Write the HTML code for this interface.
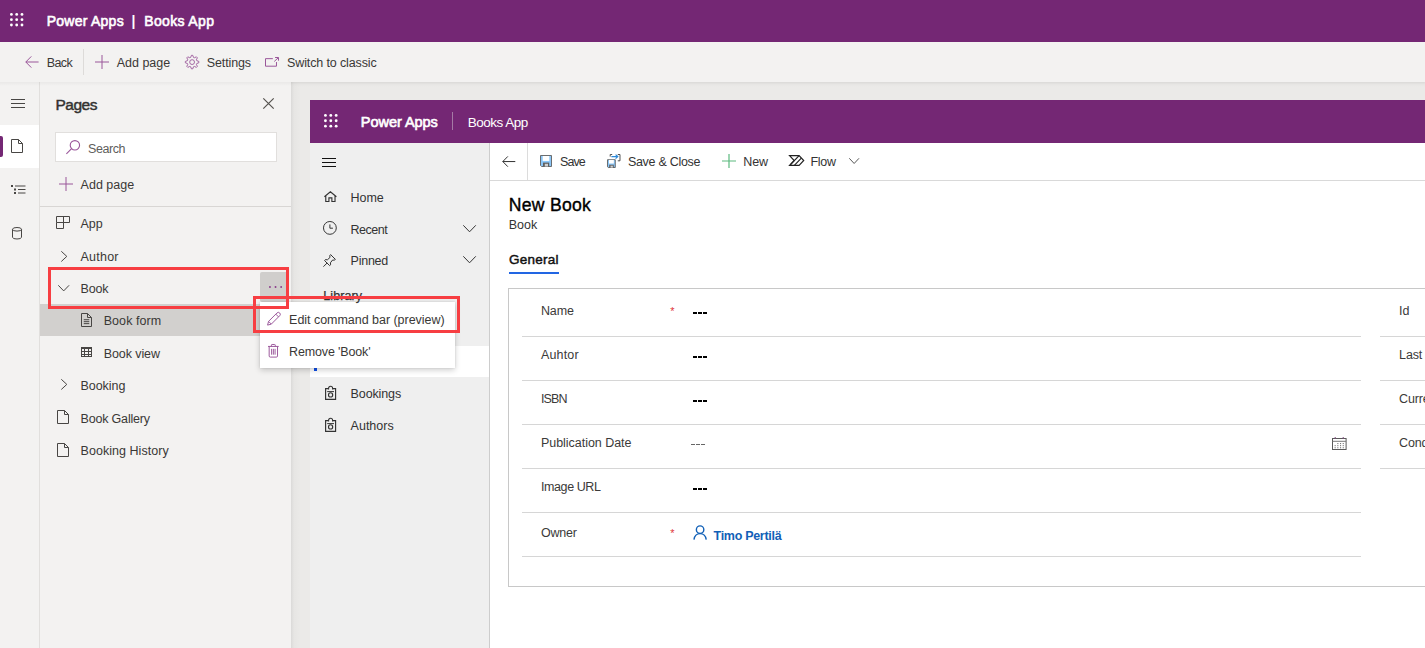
<!DOCTYPE html>
<html><head><meta charset="utf-8"><title>Power Apps</title>
<style>
*{box-sizing:border-box;margin:0;padding:0}
html,body{width:1425px;height:648px;overflow:hidden;background:#ecebe9;font-family:"Liberation Sans",sans-serif}
.a{position:absolute}
.t{position:absolute;white-space:nowrap;line-height:1}
.pb{display:inline-block;width:0;height:0;vertical-align:baseline}
svg{position:absolute;overflow:visible}
.hd{left:0;top:0;width:1425px;height:42px;background:#742774}
.cb{left:0;top:42px;width:1425px;height:40px;background:#f3f2f1;box-shadow:0 1px 2px rgba(0,0,0,.045)}
.canvas{left:291px;top:82px;width:1134px;height:566px;background:linear-gradient(to right,rgba(0,0,0,.07),rgba(0,0,0,.02) 3px,rgba(0,0,0,0) 10px),linear-gradient(to bottom,rgba(0,0,0,.035),rgba(0,0,0,0) 5px),#ebeae8}
.rail{left:0;top:82px;width:40px;height:566px;background:#f3f2f1;border-right:1px solid #e1dfdd}
.railsel{left:0;top:125px;width:39px;height:43px;background:#fff}
.railbar{left:0;top:136px;width:3px;height:21px;background:#742774;border-radius:0 2px 2px 0}
.panel{left:40px;top:82px;width:251px;height:566px;background:#f3f2f1}
.search{left:55px;top:132px;width:222px;height:30px;background:#fff;border:1px solid #e1dfdd}
.sep{left:40px;top:206px;width:251px;height:1px;background:#d8d6d4}
.rowsel{left:40px;top:304px;width:251px;height:32px;background:#d2d0ce}
.more{left:260px;top:272px;width:28px;height:30px;background:#d0cecc;border-radius:2px}
.ihd{left:310px;top:100px;width:1115px;height:43px;background:#742774}
.inav{left:310px;top:143px;width:180px;height:505px;background:#efefef;border-right:1px solid #cdcdcd}
.inavsel{left:310px;top:346px;width:179px;height:31px;background:#fff}
.inavbar{left:314px;top:351px;width:3px;height:20px;background:#0f4fe8}
.main{left:490px;top:143px;width:935px;height:505px;background:#fff}
.icb{left:490px;top:180px;width:935px;height:1px;background:#d9d9d9}
.icbv{left:527px;top:143px;width:1px;height:37px;background:#dcdcdc}
.tabul{left:509px;top:272px;width:50px;height:2px;background:#2266e3}
.sect{left:508px;top:288px;width:930px;height:299px;border:1px solid #c8c8c8;background:#fff}
.ln{height:1px;background:#d6d6d6}
.menu{left:260px;top:302px;width:195px;height:66px;background:#fff;box-shadow:0 2px 6px rgba(0,0,0,.2),0 0 2px rgba(0,0,0,.1)}
.red{border:3px solid #f73e42}
.dash{height:2px;background:#000}
</style></head><body>
<div class="a canvas"></div>
<div class="a hd"></div>
<div class="a cb"></div>
<div class="a rail"></div><div class="a railsel"></div><div class="a railbar"></div>
<div class="a panel"></div>
<div class="a" style="left:0;top:82px;width:291px;height:4px;background:linear-gradient(to bottom,rgba(0,0,0,.04),rgba(0,0,0,0))"></div>
<div class="a search"></div>
<div class="a sep"></div>
<div class="a rowsel"></div>
<div class="a more"></div>
<div class="a ihd"></div>
<div class="a inav"></div><div class="a inavsel"></div><div class="a inavbar"></div>
<div class="a main"></div>
<div class="a icb"></div><div class="a icbv"></div>
<div class="a tabul"></div>
<div class="a sect"></div>
<div class="a ln" style="left:522px;top:336px;width:839px"></div>
<div class="a ln" style="left:522px;top:380px;width:839px"></div>
<div class="a ln" style="left:522px;top:424px;width:839px"></div>
<div class="a ln" style="left:522px;top:468px;width:839px"></div>
<div class="a ln" style="left:522px;top:512px;width:839px"></div>
<div class="a ln" style="left:522px;top:556px;width:839px"></div>
<div class="a ln" style="left:1380px;top:336px;width:45px"></div>
<div class="a ln" style="left:1380px;top:380px;width:45px"></div>
<div class="a ln" style="left:1380px;top:424px;width:45px"></div>
<div class="a ln" style="left:1380px;top:468px;width:45px"></div>
<svg style="left:10.2px;top:13.2px" width="13.4" height="13.4" viewBox="0 0 13.4 13.4" ><g fill="#fff"><circle cx="1.41" cy="1.41" r="1.41"/><circle cx="1.41" cy="6.70" r="1.41"/><circle cx="1.41" cy="11.99" r="1.41"/><circle cx="6.70" cy="1.41" r="1.41"/><circle cx="6.70" cy="6.70" r="1.41"/><circle cx="6.70" cy="11.99" r="1.41"/><circle cx="11.99" cy="1.41" r="1.41"/><circle cx="11.99" cy="6.70" r="1.41"/><circle cx="11.99" cy="11.99" r="1.41"/></g></svg>
<svg style="left:25px;top:56px" width="13.6" height="12" viewBox="0 0 13.6 12" ><path d="M13.6 6.0H0.8M6.3 0.4L0.8 6.0L6.3 11.6" fill="none" stroke="#9a569a" stroke-width="1"/></svg>
<div class="a" style="left:83px;top:49px;width:1px;height:26px;background:#dddbd9"></div>
<svg style="left:94.5px;top:54.5px" width="14" height="14" viewBox="0 0 14 14" ><path d="M7.0 0V14M0 7.0H14" fill="none" stroke="#9a569a" stroke-width="1"/></svg>
<svg style="left:184.7px;top:55px" width="14.2" height="14.2" viewBox="0 0 14.2 14.2" ><path d="M13.87 6.43L13.87 7.77L11.79 8.52L11.42 9.41L12.36 11.41L11.41 12.36L9.41 11.42L8.52 11.79L7.77 13.87L6.43 13.87L5.68 11.79L4.79 11.42L2.79 12.36L1.84 11.41L2.78 9.41L2.41 8.52L0.33 7.77L0.33 6.43L2.41 5.68L2.78 4.79L1.84 2.79L2.79 1.84L4.79 2.78L5.68 2.41L6.43 0.33L7.77 0.33L8.52 2.41L9.41 2.78L11.41 1.84L12.36 2.79L11.42 4.79L11.79 5.68Z" fill="none" stroke="#9a569a" stroke-width="0.9" stroke-linejoin="round"/><circle cx="7.1" cy="7.1" r="2.41" fill="none" stroke="#9a569a" stroke-width="0.9"/></svg>
<svg style="left:265px;top:56.8px" width="14" height="9.7" viewBox="0 0 14 9.7" ><path d="M7.840000000000001 1.649H0.5V9.2H11.479999999999999V5.044" fill="none" stroke="#9a569a" stroke-width="1"/><path d="M9.24 4.462L13.2 0.8" fill="none" stroke="#9a569a" stroke-width="1"/><path d="M9.799999999999999 0.3H13.7V4.074Z" fill="#9a569a" stroke="none" opacity="0.0"/><path d="M10.08 0.5H13.5V3.686" fill="none" stroke="#9a569a" stroke-width="1"/></svg>
<svg style="left:11px;top:99px" width="14" height="9" viewBox="0 0 14 9" ><path d="M0 0.5H14M0 4.5H14M0 8.5H14" fill="none" stroke="#484644" stroke-width="1" shape-rendering="crispEdges"/></svg>
<svg style="left:11px;top:139px" width="12" height="14" viewBox="0 0 12 14" ><path d="M0.5 0.5H7.5L11.5 4.5V13.5H0.5Z" fill="none" stroke="#484644" stroke-width="1" stroke-linejoin="miter"/><path d="M7.5 0.5V4.5H11.5" fill="none" stroke="#484644" stroke-width="1"/></svg>
<svg style="left:10.5px;top:185px" width="14.5" height="9" viewBox="0 0 14.5 9" ><rect x="0" y="0" width="2" height="2" fill="#484644"/><path d="M4 1H14.5" fill="none" stroke="#484644" stroke-width="1"/><rect x="3" y="3.5" width="2" height="2" fill="#484644"/><path d="M7 4.5H14.5" fill="none" stroke="#484644" stroke-width="1"/><rect x="3" y="7" width="2" height="2" fill="#484644"/><path d="M7 8H14.5" fill="none" stroke="#484644" stroke-width="1"/></svg>
<svg style="left:12px;top:227px" width="10" height="12.5" viewBox="0 0 10 12.5" ><ellipse cx="5.0" cy="2.3" rx="4.5" ry="1.8" fill="none" stroke="#484644" stroke-width="1"/><path d="M0.5 2.3V10.2A4.5 1.8 0 0 0 9.5 10.2V2.3" fill="none" stroke="#484644" stroke-width="1"/></svg>
<svg style="left:263.2px;top:97.7px" width="11" height="11" viewBox="0 0 11 11" ><path d="M0.3 0.3L10.7 10.7M10.7 0.3L0.3 10.7" fill="none" stroke="#55534f" stroke-width="1.2"/></svg>
<svg style="left:65.9px;top:139.8px" width="14.2" height="14.2" viewBox="0 0 14.2 14.2" ><circle cx="8.91" cy="5.29" r="4.69" fill="none" stroke="#9a569a" stroke-width="1.1"/><path d="M5.60 8.60L0.4 13.799999999999999" fill="none" stroke="#9a569a" stroke-width="1.1"/></svg>
<svg style="left:58.5px;top:176.5px" width="14" height="14" viewBox="0 0 14 14" ><path d="M7.0 0V14M0 7.0H14" fill="none" stroke="#9a569a" stroke-width="1"/></svg>
<svg style="left:56px;top:216px" width="14" height="13" viewBox="0 0 14 13" ><path d="M0.5 0.5H13.5V6.5H0.5Z" fill="none" stroke="#484644" stroke-width="1"/><path d="M7.5 0.5V12.5H0.5V6.5" fill="none" stroke="#484644" stroke-width="1"/></svg>
<svg style="left:61px;top:250.8px" width="6.3" height="10.8" viewBox="0 0 6.3 10.8" ><path d="M0.3 0.3L5.8 5.4L0.3 10.5" fill="none" stroke="#484644" stroke-width="1"/></svg>
<svg style="left:57.8px;top:285px" width="11.4" height="6.4" viewBox="0 0 11.4 6.4" ><path d="M0.3 0.3L5.7 5.9L11.1 0.3" fill="none" stroke="#484644" stroke-width="1"/></svg>
<svg style="left:81px;top:313px" width="11" height="14" viewBox="0 0 11 14" ><path d="M0.5 0.5H6.5L10.5 4.5V13.5H0.5Z" fill="none" stroke="#484644" stroke-width="1" stroke-linejoin="miter"/><path d="M6.5 0.5V4.5H10.5" fill="none" stroke="#484644" stroke-width="1"/><path d="M2.75 6.72H8.25" fill="none" stroke="#484644" stroke-width="1"/><path d="M2.75 8.68H8.25" fill="none" stroke="#484644" stroke-width="1"/><path d="M2.75 10.64H8.25" fill="none" stroke="#484644" stroke-width="1"/></svg>
<svg style="left:81px;top:347px" width="11" height="10" viewBox="0 0 11 10" ><rect x="0.5" y="0.5" width="10" height="9" fill="none" stroke="#484644" stroke-width="1"/><path d="M0.5 1.5H10.5" fill="none" stroke="#484644" stroke-width="1"/><path d="M0.5 4.5H10.5M0.5 7.5H10.5M3.5 0.5V9.5M7.5 0.5V9.5" fill="none" stroke="#484644" stroke-width="1"/></svg>
<svg style="left:60.5px;top:379.3px" width="6.3" height="10.8" viewBox="0 0 6.3 10.8" ><path d="M0.3 0.3L5.8 5.4L0.3 10.5" fill="none" stroke="#484644" stroke-width="1"/></svg>
<svg style="left:57px;top:410px" width="12" height="14" viewBox="0 0 12 14" ><path d="M0.5 0.5H7.5L11.5 4.5V13.5H0.5Z" fill="none" stroke="#484644" stroke-width="1" stroke-linejoin="miter"/><path d="M7.5 0.5V4.5H11.5" fill="none" stroke="#484644" stroke-width="1"/></svg>
<svg style="left:57px;top:443px" width="12" height="14" viewBox="0 0 12 14" ><path d="M0.5 0.5H7.5L11.5 4.5V13.5H0.5Z" fill="none" stroke="#484644" stroke-width="1" stroke-linejoin="miter"/><path d="M7.5 0.5V4.5H11.5" fill="none" stroke="#484644" stroke-width="1"/></svg>
<svg style="left:268.5px;top:285.7px" width="13.1" height="2" viewBox="0 0 13.1 2" ><circle cx="0.95" cy="1" r="0.95" fill="#8a3a8a"/><circle cx="6.55" cy="1" r="0.95" fill="#8a3a8a"/><circle cx="12.15" cy="1" r="0.95" fill="#8a3a8a"/></svg>
<svg style="left:323.8px;top:114px" width="13.6" height="13.6" viewBox="0 0 13.6 13.6" ><g fill="#fff"><circle cx="1.43" cy="1.43" r="1.43"/><circle cx="1.43" cy="6.80" r="1.43"/><circle cx="1.43" cy="12.17" r="1.43"/><circle cx="6.80" cy="1.43" r="1.43"/><circle cx="6.80" cy="6.80" r="1.43"/><circle cx="6.80" cy="12.17" r="1.43"/><circle cx="12.17" cy="1.43" r="1.43"/><circle cx="12.17" cy="6.80" r="1.43"/><circle cx="12.17" cy="12.17" r="1.43"/></g></svg>
<div class="a" style="left:452px;top:112px;width:1px;height:18px;background:#a57aa5"></div>
<svg style="left:322px;top:158px" width="14" height="9" viewBox="0 0 14 9" ><path d="M0 0.5H14M0 4.5H14M0 8.5H14" fill="none" stroke="#111" stroke-width="1" shape-rendering="crispEdges"/></svg>
<svg style="left:323.8px;top:191.3px" width="12.8" height="11.2" viewBox="0 0 13 11" ><path d="M0.4 5.6L6.5 0.6L12.6 5.6M1.8 4.6V10.5H5V6.8H8V10.5H11.2V4.6" fill="none" stroke="#333" stroke-width="1.15" stroke-linejoin="miter"/></svg>
<svg style="left:323px;top:221px" width="13.8" height="13.8" viewBox="0 0 13.8 13.8" ><circle cx="6.9" cy="6.9" r="6.4" fill="none" stroke="#333" stroke-width="1"/><path d="M6.9 3.45V7.2H9.936" fill="none" stroke="#333" stroke-width="1"/></svg>
<svg style="left:323px;top:254px" width="13" height="13" viewBox="0 0 13 13" ><path d="M7.6 0.6L12.4 5.4L11.2 6.2L9.6 6L7.4 8.8L7.6 10.8L6.6 11.6L1.6 6.6L2.4 5.6L4.4 5.8L7 3.4L6.8 1.6Z" fill="none" stroke="#333" stroke-width="1" stroke-linejoin="round"/><path d="M4.2 8.9L0.4 12.7" fill="none" stroke="#333" stroke-width="1"/></svg>
<svg style="left:462.6px;top:225.2px" width="13.1" height="7.3" viewBox="0 0 13.1 7.3" ><path d="M0.3 0.3L6.55 6.8L12.799999999999999 0.3" fill="none" stroke="#333" stroke-width="1"/></svg>
<svg style="left:462.6px;top:256.2px" width="13.1" height="7.3" viewBox="0 0 13.1 7.3" ><path d="M0.3 0.3L6.55 6.8L12.799999999999999 0.3" fill="none" stroke="#333" stroke-width="1"/></svg>
<svg style="left:324.5px;top:386px" width="11.2" height="14" viewBox="0 0 11.2 14" ><path d="M3.4 2.6H0.6V13.4H10.6V2.6H7.8" fill="none" stroke="#333" stroke-width="1.15"/><path d="M3.6 3.4V2.2A2 2 0 0 1 7.6 2.2V3.4" fill="none" stroke="#333" stroke-width="1.1"/><path d="M2.2 5.6H9" fill="none" stroke="#333" stroke-width="1"/><circle cx="5.6" cy="8.9" r="2.1" fill="none" stroke="#333" stroke-width="1.15"/></svg>
<svg style="left:324.5px;top:417.6px" width="11.2" height="14" viewBox="0 0 11.2 14" ><path d="M3.4 2.6H0.6V13.4H10.6V2.6H7.8" fill="none" stroke="#333" stroke-width="1.15"/><path d="M3.6 3.4V2.2A2 2 0 0 1 7.6 2.2V3.4" fill="none" stroke="#333" stroke-width="1.1"/><path d="M2.2 5.6H9" fill="none" stroke="#333" stroke-width="1"/><circle cx="5.6" cy="8.9" r="2.1" fill="none" stroke="#333" stroke-width="1.15"/></svg>
<svg style="left:502px;top:156.1px" width="13.3" height="11.1" viewBox="0 0 13.3 11.1" ><path d="M13.3 5.55H0.8M5.85 0.4L0.8 5.55L5.85 10.7" fill="none" stroke="#333" stroke-width="1"/></svg>
<svg style="left:540px;top:155px" width="12" height="12" viewBox="0 0 12 12" ><path d="M0.5 0.5H11.5V11.5H1.6L0.5 10.4Z" fill="#8ac6f8" stroke="#606060" stroke-width="0.9"/><rect x="2.70" y="1.00" width="6.60" height="4.90" fill="#fff"/><rect x="3.00" y="7.60" width="6.20" height="3.90" fill="#5e5e5e"/><rect x="4.80" y="8.80" width="3.20" height="2.70" fill="#cfcfcf"/></svg>
<svg style="left:607px;top:153.8px" width="13.4" height="14" viewBox="0 0 13.4 14" ><path d="M0.5 5.7H8.3V13.5H1.1733333333333336L0.5 12.826666666666666Z" fill="#8ac6f8" stroke="#606060" stroke-width="0.9"/><rect x="1.98" y="5.93" width="4.84" height="3.59" fill="#fff"/><rect x="2.20" y="10.77" width="4.55" height="2.86" fill="#5e5e5e"/><rect x="3.52" y="11.65" width="2.35" height="1.98" fill="#cfcfcf"/><path d="M3.2 2.6V0.5H5.2M10.8 0.5H13V6.8H10.8" fill="none" stroke="#505050" stroke-width="1"/><path d="M4.4 2.6H10.6M8.6 0.6L10.8 2.6L8.6 4.6" fill="none" stroke="#2b88d8" stroke-width="1.2"/></svg>
<svg style="left:722px;top:154px" width="14" height="14" viewBox="0 0 14 14" ><path d="M7.0 0V14M0 7.0H14" fill="none" stroke="#5cb97f" stroke-width="1.2"/></svg>
<svg style="left:788.6px;top:155.3px" width="15.4" height="11" viewBox="0 0 16 11" ><path d="M0.6 0.5H10.5L15.3 5.5L10.5 10.5H0.6L5.4 5.5Z" fill="none" stroke="#222" stroke-width="1.2" stroke-linejoin="miter"/><path d="M10.5 0.5L1.2 10.2M12.8 3L5.6 10.5" fill="none" stroke="#222" stroke-width="1.2"/></svg>
<svg style="left:849px;top:157.8px" width="10.3" height="6" viewBox="0 0 10.3 6" ><path d="M0.3 0.3L5.15 5.5L10.0 0.3" fill="none" stroke="#555" stroke-width="1"/></svg>
<svg style="left:1332.2px;top:437px" width="14.6" height="13" viewBox="0 0 14.6 13" ><rect x="0.5" y="1.5" width="13.6" height="11" fill="#fff" stroke="#5a5a5a" stroke-width="1"/><path d="M0.5 4.3H14" stroke="#777" stroke-width="1"/><path d="M3.2 0V2M11.2 0V2" stroke="#7a4a7a" stroke-width="1"/><rect x="5.3" y="6.0" width="1.1" height="1.1" fill="#777"/><rect x="8.0" y="6.0" width="1.1" height="1.1" fill="#777"/><rect x="10.7" y="6.0" width="1.1" height="1.1" fill="#777"/><rect x="2.6" y="8.1" width="1.1" height="1.1" fill="#777"/><rect x="5.3" y="8.1" width="1.1" height="1.1" fill="#777"/><rect x="8.0" y="8.1" width="1.1" height="1.1" fill="#777"/><rect x="10.7" y="8.1" width="1.1" height="1.1" fill="#777"/><rect x="2.6" y="10.2" width="1.1" height="1.1" fill="#777"/><rect x="5.3" y="10.2" width="1.1" height="1.1" fill="#777"/><rect x="8.0" y="10.2" width="1.1" height="1.1" fill="#777"/><rect x="10.7" y="10.2" width="1.1" height="1.1" fill="#777"/></svg>
<svg style="left:692.6px;top:525.3px" width="14.2" height="15.1" viewBox="0 0 14 15" ><circle cx="7" cy="4.6" r="3.7" fill="none" stroke="#1160b7" stroke-width="1.4"/><path d="M0.9 14.6C1.5 10.6 4 8.6 7 8.6C10 8.6 12.5 10.6 13.1 14.6" fill="none" stroke="#1160b7" stroke-width="1.4"/></svg>
<span class="a" style="left:670.3px;top:305.5px;font-size:11px;line-height:1;color:#e0363c;font-family:'Liberation Sans',sans-serif">*</span>
<span class="a" style="left:670.3px;top:527.5px;font-size:11px;line-height:1;color:#e0363c;font-family:'Liberation Sans',sans-serif">*</span>
<div class="a dash" style="left:693px;top:312px;width:4px"></div>
<div class="a dash" style="left:698px;top:312px;width:4px"></div>
<div class="a dash" style="left:703px;top:312px;width:4px"></div>
<div class="a dash" style="left:693px;top:356px;width:4px"></div>
<div class="a dash" style="left:698px;top:356px;width:4px"></div>
<div class="a dash" style="left:703px;top:356px;width:4px"></div>
<div class="a dash" style="left:693px;top:400px;width:4px"></div>
<div class="a dash" style="left:698px;top:400px;width:4px"></div>
<div class="a dash" style="left:703px;top:400px;width:4px"></div>
<div class="a dash" style="left:693px;top:488px;width:4px"></div>
<div class="a dash" style="left:698px;top:488px;width:4px"></div>
<div class="a dash" style="left:703px;top:488px;width:4px"></div>
<div class="a" style="left:691px;top:444px;width:4px;height:1px;background:#666"></div>
<div class="a" style="left:696px;top:444px;width:4px;height:1px;background:#666"></div>
<div class="a" style="left:701px;top:444px;width:4px;height:1px;background:#666"></div>
<div class="a menu"></div>
<span class="t" id="t0" style="left:46.7px;top:14px;font-size:14px;font-weight:400;color:#fff;letter-spacing:0.248px;-webkit-text-stroke:0.6px #fff;">Power Apps</span>
<span class="t" id="t1" style="left:131.6px;top:14px;font-size:14px;font-weight:700;color:#fff;letter-spacing:0.000px;">|</span>
<span class="t" id="t2" style="left:144.3px;top:14px;font-size:14px;font-weight:400;color:#fff;letter-spacing:0.340px;-webkit-text-stroke:0.6px #fff;">Books App</span>
<span class="t" id="t3" style="left:46.7px;top:57px;font-size:12.5px;font-weight:400;color:#3a3836;letter-spacing:-0.574px;">Back</span>
<span class="t" id="t4" style="left:116.8px;top:57px;font-size:12.5px;font-weight:400;color:#3a3836;letter-spacing:-0.029px;">Add page</span>
<span class="t" id="t5" style="left:206.8px;top:57px;font-size:12.5px;font-weight:400;color:#3a3836;letter-spacing:-0.121px;">Settings</span>
<span class="t" id="t6" style="left:287.1px;top:57px;font-size:12.5px;font-weight:400;color:#3a3836;letter-spacing:-0.130px;">Switch to classic</span>
<span class="t" id="t7" style="left:55.5px;top:97px;font-size:15.5px;font-weight:400;color:#323130;letter-spacing:-0.491px;-webkit-text-stroke:0.45px #323130;">Pages</span>
<span class="t" id="t8" style="left:88px;top:143px;font-size:12.5px;font-weight:400;color:#605e5c;letter-spacing:-0.435px;">Search</span>
<span class="t" id="t9" style="left:80.6px;top:179px;font-size:12.5px;font-weight:400;color:#3a3836;letter-spacing:-0.004px;">Add page</span>
<span class="t" id="t10" style="left:80.4px;top:218px;font-size:12.5px;font-weight:400;color:#3a3836;letter-spacing:0.050px;">App</span>
<span class="t" id="t11" style="left:80.4px;top:251px;font-size:12.5px;font-weight:400;color:#3a3836;letter-spacing:0.259px;">Author</span>
<span class="t" id="t12" style="left:80.5px;top:283px;font-size:12.5px;font-weight:400;color:#3a3836;letter-spacing:-0.175px;">Book</span>
<span class="t" id="t13" style="left:103.7px;top:315px;font-size:12.5px;font-weight:400;color:#3a3836;letter-spacing:0.070px;">Book form</span>
<span class="t" id="t14" style="left:103.7px;top:348px;font-size:12.5px;font-weight:400;color:#3a3836;letter-spacing:-0.087px;">Book view</span>
<span class="t" id="t15" style="left:80.5px;top:380px;font-size:12.5px;font-weight:400;color:#3a3836;letter-spacing:-0.041px;">Booking</span>
<span class="t" id="t16" style="left:80.5px;top:413px;font-size:12.5px;font-weight:400;color:#3a3836;letter-spacing:-0.180px;">Book Gallery</span>
<span class="t" id="t17" style="left:80.5px;top:445px;font-size:12.5px;font-weight:400;color:#3a3836;letter-spacing:0.050px;">Booking History</span>
<span class="t" id="t18" style="left:289.1px;top:314px;font-size:12.5px;font-weight:400;color:#3a3836;letter-spacing:-0.031px;">Edit command bar (preview)</span>
<span class="t" id="t19" style="left:289.1px;top:346px;font-size:12.5px;font-weight:400;color:#3a3836;letter-spacing:-0.154px;">Remove 'Book'</span>
<span class="t" id="t20" style="left:360.8px;top:115px;font-size:14.5px;font-weight:400;color:#fff;letter-spacing:-0.039px;-webkit-text-stroke:0.65px #fff;">Power Apps</span>
<span class="t" id="t21" style="left:467.7px;top:116px;font-size:13.5px;font-weight:400;color:#fff;letter-spacing:-0.505px;">Books App</span>
<span class="t" id="t22" style="left:350.6px;top:192px;font-size:12.5px;font-weight:400;color:#333333;letter-spacing:-0.086px;">Home</span>
<span class="t" id="t23" style="left:350.6px;top:224px;font-size:12.5px;font-weight:400;color:#333333;letter-spacing:-0.518px;">Recent</span>
<span class="t" id="t24" style="left:350.6px;top:255px;font-size:12.5px;font-weight:400;color:#333333;letter-spacing:-0.256px;">Pinned</span>
<span class="t" id="t25" style="left:323.2px;top:290px;font-size:12.5px;font-weight:400;color:#333333;letter-spacing:0.112px;-webkit-text-stroke:0.25px #333333;">Library</span>
<span class="t" id="t26" style="left:350.6px;top:388px;font-size:12.5px;font-weight:400;color:#333333;letter-spacing:-0.117px;">Bookings</span>
<span class="t" id="t27" style="left:350.6px;top:420px;font-size:12.5px;font-weight:400;color:#333333;letter-spacing:0.001px;">Authors</span>
<span class="t" id="t28" style="left:560px;top:156px;font-size:12.5px;font-weight:400;color:#333;letter-spacing:-0.925px;">Save</span>
<span class="t" id="t29" style="left:627.9px;top:156px;font-size:12.5px;font-weight:400;color:#333;letter-spacing:-0.286px;">Save & Close</span>
<span class="t" id="t30" style="left:743.3px;top:156px;font-size:12.5px;font-weight:400;color:#333;letter-spacing:-0.139px;">New</span>
<span class="t" id="t31" style="left:810.4px;top:156px;font-size:12.5px;font-weight:400;color:#333;letter-spacing:-0.227px;">Flow</span>
<span class="t" id="t32" style="left:508.7px;top:197px;font-size:17.6px;font-weight:400;color:#000;letter-spacing:0.277px;-webkit-text-stroke:0.38px #000;">New Book</span>
<span class="t" id="t33" style="left:508.8px;top:219px;font-size:12.5px;font-weight:400;color:#333;letter-spacing:-0.025px;">Book</span>
<span class="t" id="t34" style="left:509px;top:253px;font-size:13.5px;font-weight:400;color:#111;letter-spacing:0.238px;-webkit-text-stroke:0.45px #111;">General</span>
<span class="t" id="t35" style="left:541px;top:305px;font-size:12.5px;font-weight:400;color:#3b3a39;letter-spacing:-0.161px;">Name</span>
<span class="t" id="t36" style="left:541px;top:349px;font-size:12.5px;font-weight:400;color:#3b3a39;letter-spacing:0.143px;">Auhtor</span>
<span class="t" id="t37" style="left:541px;top:393px;font-size:12.5px;font-weight:400;color:#3b3a39;letter-spacing:-0.897px;">ISBN</span>
<span class="t" id="t38" style="left:541px;top:437px;font-size:12.5px;font-weight:400;color:#3b3a39;letter-spacing:-0.039px;">Publication Date</span>
<span class="t" id="t39" style="left:541px;top:481px;font-size:12.5px;font-weight:400;color:#3b3a39;letter-spacing:-0.415px;">Image URL</span>
<span class="t" id="t40" style="left:541px;top:527px;font-size:12.5px;font-weight:400;color:#3b3a39;letter-spacing:-0.226px;">Owner</span>
<span class="t" id="t41" style="left:713.6px;top:530px;font-size:12.5px;font-weight:700;color:#1160b7;letter-spacing:-0.302px;">Timo Pertilä</span>
<span class="t" id="t42" style="left:1399.1px;top:305px;font-size:12.5px;font-weight:400;color:#3b3a39;letter-spacing:-0.127px;">Id</span>
<span class="t" id="t43" style="left:1399.1px;top:349px;font-size:12.5px;font-weight:400;color:#3b3a39;letter-spacing:-0.153px;">Last M</span>
<span class="t" id="t44" style="left:1399.1px;top:393px;font-size:12.5px;font-weight:400;color:#3b3a39;letter-spacing:-0.145px;">Current</span>
<span class="t" id="t45" style="left:1399.1px;top:437px;font-size:12.5px;font-weight:400;color:#3b3a39;letter-spacing:-0.143px;">Condition</span>
<svg style="left:267px;top:312.3px" width="13.7" height="13.7" viewBox="0 0 14 14" ><path d="M0.6 13.4L1.6 9.6L10.2 1A1.7 1.7 0 0 1 13 3.8L4.4 12.4Z" fill="none" stroke="#9a569a" stroke-width="1" stroke-linejoin="round"/><path d="M1.6 9.6L4.4 12.4M9 2.2L11.8 5" fill="none" stroke="#9a569a" stroke-width="1"/></svg>
<svg style="left:268px;top:344px" width="10.7" height="13.6" viewBox="0 0 11 14" ><path d="M0 2.5H11M3.5 2.5V1.2A0.7 0.7 0 0 1 4.2 0.5H6.8A0.7 0.7 0 0 1 7.5 1.2V2.5M1.2 2.5V12.3A1.2 1.2 0 0 0 2.4 13.5H8.6A1.2 1.2 0 0 0 9.8 12.3V2.5" fill="none" stroke="#9a569a" stroke-width="1"/><path d="M3.7 5V11M5.5 5V11M7.3 5V11" fill="none" stroke="#9a569a" stroke-width="1"/></svg>
<div class="a red" style="left:48px;top:267px;width:241px;height:42px"></div>
<div class="a red" style="left:253px;top:296px;width:207px;height:37px"></div>
</body></html>
